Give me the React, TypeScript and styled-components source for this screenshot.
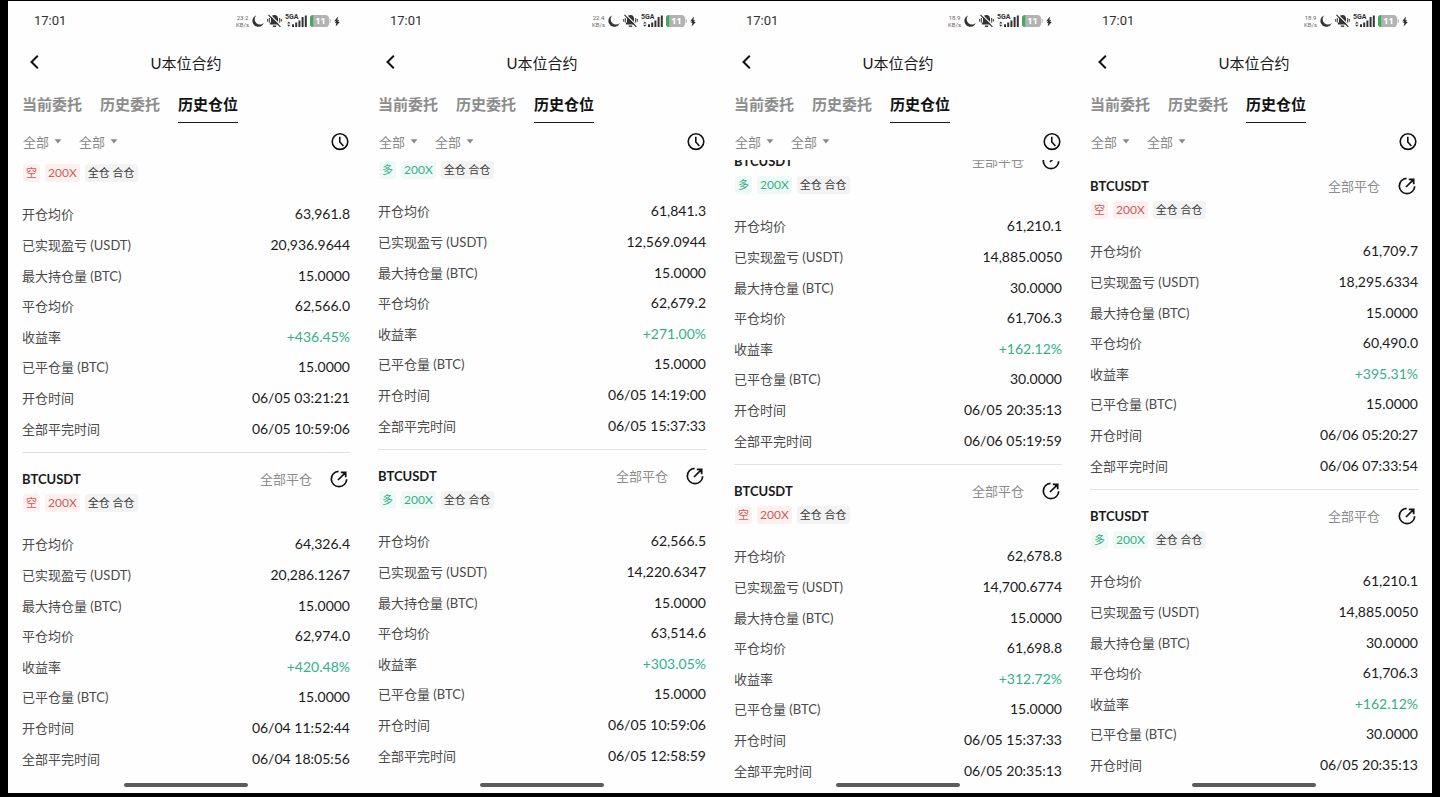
import React, { useLayoutEffect, useRef } from "react";
import styled, { createGlobalStyle } from "styled-components";

const GlobalStyle = createGlobalStyle`
  *, *::before, *::after { box-sizing: border-box; }
  body {
    margin: 0;
    background: #000;
    color: #1a1a1a;
    font-family: Lato, "Noto Sans CJK SC", sans-serif;
    font-variant-numeric: tabular-nums;
  }
  button, select {
    margin: 0;
    padding: 0;
    border: 0;
    background: none;
    color: inherit;
    font: inherit;
    cursor: pointer;
  }
`;

type Side = "long" | "short";

interface Position {
  side: Side;
  values: string[];
}

interface Screen {
  speed: string;
  scroll: number;
  positions: Position[];
}

const LABELS = [
  "开仓均价",
  "已实现盈亏 (USDT)",
  "最大持仓量 (BTC)",
  "平仓均价",
  "收益率",
  "已平仓量 (BTC)",
  "开仓时间",
  "全部平完时间",
];

const SCREENS: Screen[] = [
  {
    speed: "23.2",
    scroll: 37,
    positions: [
      { side: "short", values: ["63,961.8", "20,936.9644", "15.0000", "62,566.0", "+436.45%", "15.0000", "06/05 03:21:21", "06/05 10:59:06"] },
      { side: "short", values: ["64,326.4", "20,286.1267", "15.0000", "62,974.0", "+420.48%", "15.0000", "06/04 11:52:44", "06/04 18:05:56"] },
    ],
  },
  {
    speed: "22.4",
    scroll: 40,
    positions: [
      { side: "long", values: ["61,841.3", "12,569.0944", "15.0000", "62,679.2", "+271.00%", "15.0000", "06/05 14:19:00", "06/05 15:37:33"] },
      { side: "long", values: ["62,566.5", "14,220.6347", "15.0000", "63,514.6", "+303.05%", "15.0000", "06/05 10:59:06", "06/05 12:58:59"] },
    ],
  },
  {
    speed: "18.9",
    scroll: 25,
    positions: [
      { side: "long", values: ["61,210.1", "14,885.0050", "30.0000", "61,706.3", "+162.12%", "30.0000", "06/05 20:35:13", "06/06 05:19:59"] },
      { side: "short", values: ["62,678.8", "14,700.6774", "15.0000", "61,698.8", "+312.72%", "15.0000", "06/05 15:37:33", "06/05 20:35:13"] },
    ],
  },
  {
    speed: "18.9",
    scroll: 0,
    positions: [
      { side: "short", values: ["61,709.7", "18,295.6334", "15.0000", "60,490.0", "+395.31%", "15.0000", "06/06 05:20:27", "06/06 07:33:54"] },
      { side: "long", values: ["61,210.1", "14,885.0050", "30.0000", "61,706.3", "+162.12%", "30.0000", "06/05 20:35:13", "06/06 05:19:59"] },
    ],
  },
];

const Page = styled.main`
  display: grid;
  grid-template-columns: repeat(4, minmax(0, 1fr));
  height: 100vh;
  padding: 1px 8px 4px;
`;

const Phone = styled.section`
  display: flex;
  flex-direction: column;
  min-height: 0;
  background: #fefefe;
`;

const StatusBar = styled.div`
  display: flex;
  align-items: center;
  justify-content: space-between;
  flex: none;
  height: 40px;
  padding: 0 24px 0 26px;
`;

const Time = styled.time`
  font-family: Roboto, sans-serif;
  font-size: 13px;
  line-height: 16px;
  color: #333;
`;

const StatusIcons = styled.div`
  display: flex;
  align-items: center;
  gap: 3px;
  color: #333;

  svg { display: block; }
`;

const Speed = styled.span`
  width: 13px;
  font-family: Roboto, sans-serif;
  font-size: 6px;
  line-height: 7px;
  text-align: center;
  color: #666;
`;

const NavBar = styled.header`
  display: grid;
  grid-template-columns: 28px 1fr 28px;
  align-items: center;
  flex: none;
  height: 44px;
  padding: 0 14px;
`;

const Title = styled.h1`
  margin: 0;
  font-size: 15px;
  font-weight: 400;
  line-height: 20px;
  text-align: center;
`;

const IconButton = styled.button`
  display: flex;
  align-items: center;
  justify-content: center;
  width: 24px;
  height: 20px;
`;

const Tabs = styled.div`
  display: flex;
  gap: 18px;
  flex: none;
  height: 38px;
  padding: 0 14px;
`;

const Tab = styled.button<{ $active?: boolean }>`
  height: 38px;
  border-bottom: 1px solid ${(p) => (p.$active ? "#1a1a1a" : "transparent")};
  font-size: 15px;
  font-weight: 700;
  line-height: 36px;
  color: ${(p) => (p.$active ? "#111" : "#8c8c8c")};
`;

const Filters = styled.div`
  display: flex;
  align-items: center;
  gap: 17px;
  flex: none;
  height: 37px;
  padding: 0 12px 0 15px;
`;

const Filter = styled.label`
  display: flex;
  align-items: center;
  gap: 5px;
  color: #8a8a8a;
`;

const FilterSelect = styled.select`
  appearance: none;
  width: 26px;
  font-size: 13px;
  line-height: 20px;
  outline: none;
`;

const Spacer = styled.span`
  flex: 1;
`;

const Scroller = styled.div`
  flex: 1;
  min-height: 0;
  overflow: hidden;
`;

const Card = styled.article`
  margin: 0 14px;
  padding: 16px 0 8px;
  border-bottom: 1px solid #e2e2e2;
`;

const CardHead = styled.div`
  display: flex;
  align-items: center;
  gap: 15px;
  height: 20px;
`;

const Symbol = styled.h2`
  flex: 1;
  margin: 0;
  font-size: 13px;
  font-weight: 700;
  line-height: 20px;
`;

const State = styled.span`
  font-size: 13px;
  line-height: 20px;
  color: #8c8c8c;
`;

const ShareButton = styled(IconButton)`
  margin-right: -1px;
`;

const Tags = styled.div`
  display: flex;
  gap: 5px;
  margin-top: 5px;
  padding-left: 1px;
`;

const TONES = {
  long: { color: "#35b08a", background: "#effaf6" },
  short: { color: "#cf5b58", background: "#fdf1f0" },
  plain: { color: "#3a3a3a", background: "#f3f3f3" },
};

const Tag = styled.span<{ $tone: keyof typeof TONES; $latin?: boolean }>`
  height: 18px;
  padding: 0 3px;
  border-radius: 3px;
  font-size: ${(p) => (p.$latin ? 12 : 11)}px;
  line-height: 18px;
  color: ${(p) => TONES[p.$tone].color};
  background: ${(p) => TONES[p.$tone].background};
`;

const Details = styled.dl`
  display: grid;
  grid-auto-rows: 1fr;
  height: 245px;
  margin: 17px 0 0;
`;

const Row = styled.div`
  display: flex;
  align-items: center;
  justify-content: space-between;
`;

const Label = styled.dt`
  font-size: 13px;
  line-height: 20px;
  color: #4a4a4a;
`;

const Value = styled.dd<{ $gain?: boolean }>`
  margin: 0;
  font-size: 14px;
  line-height: 20px;
  color: ${(p) => (p.$gain ? "#33b089" : "#1a1a1a")};
`;

const HomeBar = styled.div`
  display: flex;
  justify-content: center;
  flex: none;
  height: 14px;
  padding-top: 4px;

  &::after {
    content: "";
    width: 124px;
    height: 4px;
    border-radius: 2px;
    background: #5c5c5c;
  }
`;

const BackIcon = () => (
  <svg width="10" height="16" viewBox="0 0 10 16" fill="none" stroke="#111" strokeWidth="2">
    <path d="M8.800 .8 2.500 7l6.300 6.200" />
  </svg>
);

const CaretIcon = () => (
  <svg width="8" height="5" viewBox="0 0 8 5" fill="#8a8a8a">
    <path d="M.5.2h7L4 4.6z" />
  </svg>
);

const ClockIcon = () => (
  <svg width="18" height="18" viewBox="0 0 18 18" fill="none" stroke="#111" strokeWidth="1.6">
    <circle cx="9" cy="8.6" r="7.8" />
    <path d="M8.800 3.800V9l3.600 4" />
  </svg>
);

const ShareIcon = () => (
  <svg width="18" height="18" viewBox="0 0 18 18" fill="none" stroke="#111" strokeWidth="1.7">
    <path d="M8.600 1.300A7.700 7.700 0 1 0 16.700 9.200" />
    <path d="M8 10 15.200 2.800" />
    <path d="M10.800 2.400h4.900v4.900" />
    <path d="M12 2.400h3.700v3.700z" fill="#111" stroke="none" />
  </svg>
);

const MoonIcon = () => (
  <svg width="12" height="12" viewBox="0 0 12 12" fill="currentColor">
    <path d="M4.200.4A5.900 5.900 0 1 0 11.800 8 5.200 5.200 0 0 1 4.200.4z" />
  </svg>
);

const MutedBellIcon = () => (
  <svg width="15" height="14" viewBox="0 0 15 14" fill="none" stroke="currentColor">
    <path d="M7.500 1C5.200 1 4 2.700 4 4.600v3.200L2.800 9.400v1h9.400v-1L11 7.800V4.600C11 2.700 9.800 1 7.500 1z" fill="currentColor" stroke="none" />
    <path d="M5.800 12.200h3.400" strokeWidth="1.400" />
    <path d="M2.300 4v4.600M.7 5v2.600M12.700 4v4.600M14.300 5v2.600" />
    <path d="M2.600.4 14.400 12.200" stroke="#fefefe" strokeWidth="1.200" />
    <path d="M1.400.8 13.400 12.800" strokeWidth="1.200" />
  </svg>
);

const SignalIcon = () => (
  <svg width="22" height="14" viewBox="0 0 22 14" fill="currentColor">
    <text x="0" y="5" fontSize="7" fontWeight="700" fontFamily="Roboto, sans-serif">5GA</text>
    <path d="M2.200 9.400 3.800 7.400 5.400 9.400zM2.200 10.800h3.200L3.800 12.800zM7 10.200h2v2.800H7zM10.200 8.400h2V13h-2zM13.400 6.400h2V13h-2zM16.600 3h2v10h-2zM19.800 1.400h2V13h-2z" />
  </svg>
);

const BatteryIcon = () => (
  <svg width="21" height="12" viewBox="0 0 21 12">
    <rect x="0" y="0" width="19" height="12" rx="3.600" fill="#b3b3b3" />
    <path d="M3.200 0v12A3.400 3.400 0 0 1 0 8.400V3.600A3.400 3.400 0 0 1 3.200 0z" fill="#3fae5c" />
    <path d="M19.600 3.600c.9.400 1.300 1.200 1.300 2.400s-.4 2-1.300 2.400z" fill="#b3b3b3" />
    <text x="10.500" y="9.200" fontSize="9" fontWeight="700" fontFamily="Noto Sans, sans-serif" textAnchor="middle" fill="#fff">11</text>
  </svg>
);

const BoltIcon = () => (
  <svg width="6" height="11" viewBox="0 0 6 11" fill="currentColor">
    <path d="M3.900.6.2 5.200h1.900L1 7h1.300l-.6 3.400L5.800 6H4.100L5.200 4.200H3.500z" />
  </svg>
);

function PositionCard({ position }: { position: Position }) {
  return (
    <Card>
      <CardHead>
        <Symbol>BTCUSDT</Symbol>
        <State>全部平仓</State>
        <ShareButton type="button" aria-label="分享">
          <ShareIcon />
        </ShareButton>
      </CardHead>
      <Tags>
        <Tag $tone={position.side}>{position.side === "long" ? "多" : "空"}</Tag>
        <Tag $tone={position.side} $latin>200X</Tag>
        <Tag $tone="plain">全仓 合仓</Tag>
      </Tags>
      <Details>
        {LABELS.map((label, i) => (
          <Row key={label}>
            <Label>{label}</Label>
            <Value $gain={label === "收益率"}>{position.values[i]}</Value>
          </Row>
        ))}
      </Details>
    </Card>
  );
}

function PhoneScreen({ screen }: { screen: Screen }) {
  const scroller = useRef<HTMLDivElement>(null);

  useLayoutEffect(() => {
    if (scroller.current) scroller.current.scrollTop = screen.scroll;
  }, [screen.scroll]);

  return (
    <Phone>
      <StatusBar>
        <Time>17:01</Time>
        <StatusIcons>
          <Speed>{screen.speed} KB/s</Speed>
          <MoonIcon />
          <MutedBellIcon />
          <SignalIcon />
          <BatteryIcon />
          <BoltIcon />
        </StatusIcons>
      </StatusBar>
      <NavBar>
        <IconButton type="button" aria-label="返回">
          <BackIcon />
        </IconButton>
        <Title>U本位合约</Title>
      </NavBar>
      <Tabs role="tablist">
        <Tab type="button" role="tab">当前委托</Tab>
        <Tab type="button" role="tab">历史委托</Tab>
        <Tab type="button" role="tab" aria-selected $active>历史仓位</Tab>
      </Tabs>
      <Filters>
        <Filter>
          <FilterSelect aria-label="合约">
            <option>全部</option>
          </FilterSelect>
          <CaretIcon />
        </Filter>
        <Filter>
          <FilterSelect aria-label="方向">
            <option>全部</option>
          </FilterSelect>
          <CaretIcon />
        </Filter>
        <Spacer />
        <IconButton type="button" aria-label="时间">
          <ClockIcon />
        </IconButton>
      </Filters>
      <Scroller ref={scroller}>
        {screen.positions.map((position, i) => (
          <PositionCard key={i} position={position} />
        ))}
      </Scroller>
      <HomeBar />
    </Phone>
  );
}

export default function App() {
  return (
    <>
      <GlobalStyle />
      <Page>
        {SCREENS.map((screen, i) => (
          <PhoneScreen key={i} screen={screen} />
        ))}
      </Page>
    </>
  );
}
